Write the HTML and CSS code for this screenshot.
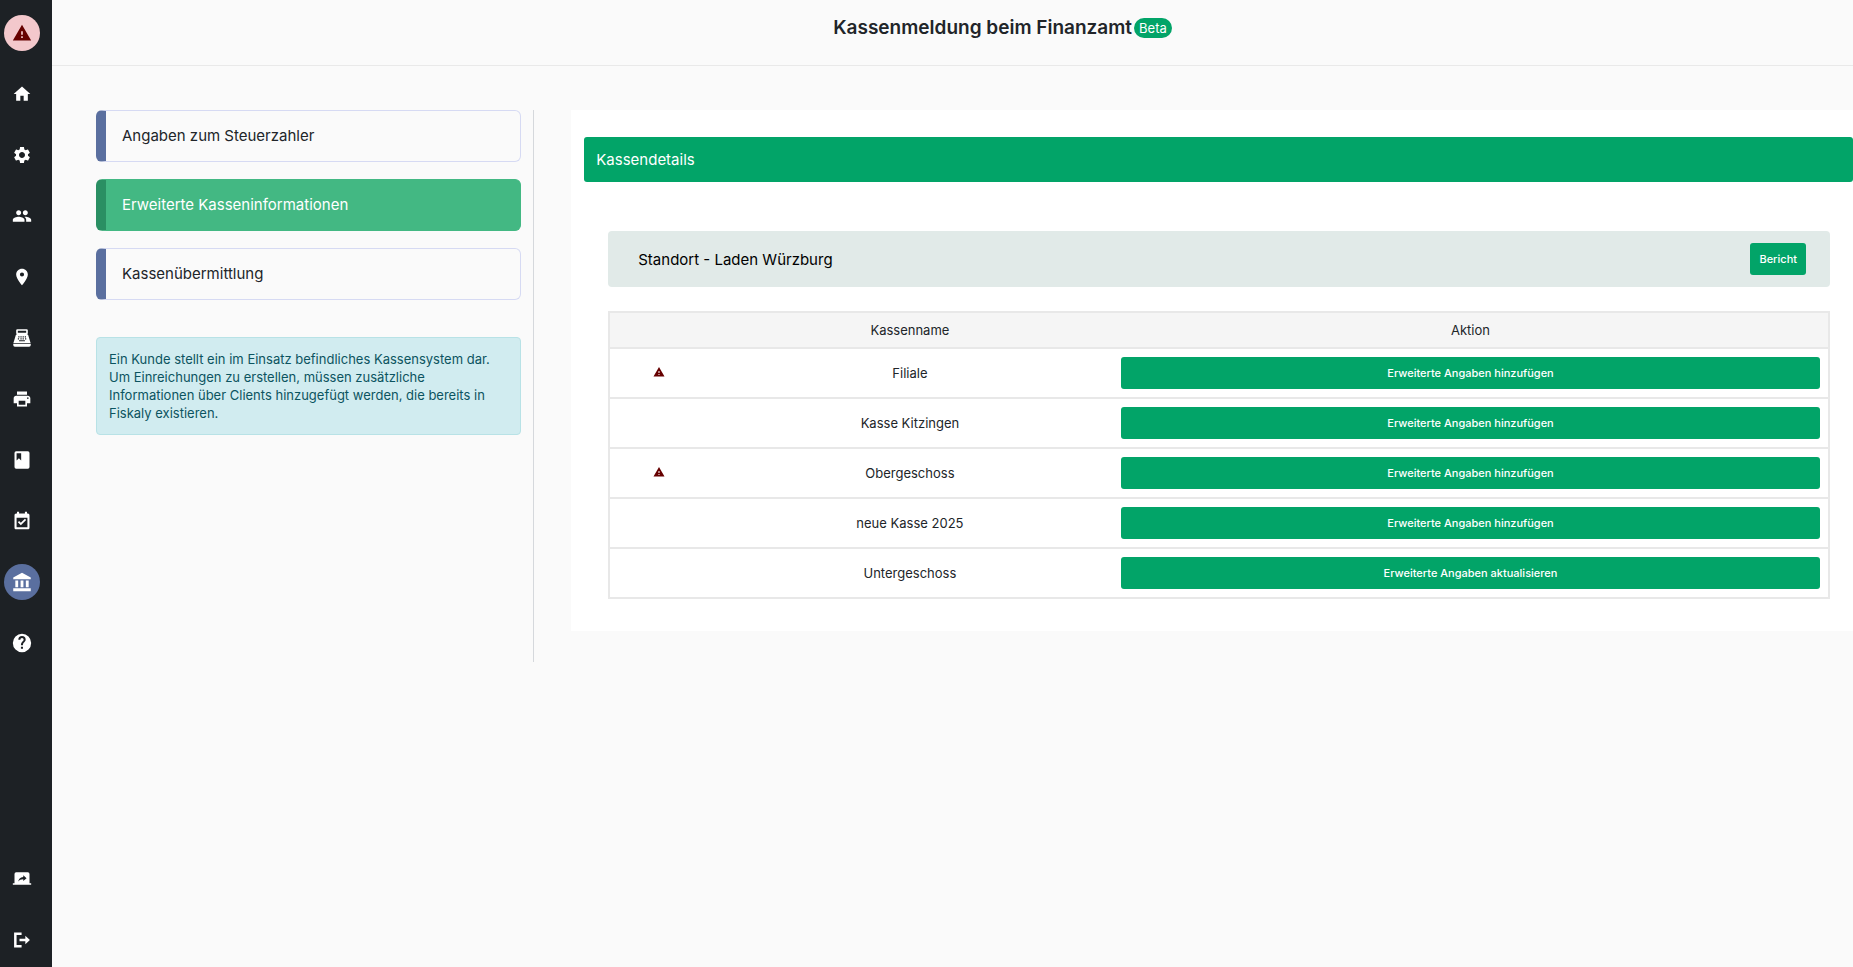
FILE: index.html
```html
<!DOCTYPE html>
<html lang="de">
<head>
<meta charset="utf-8">
<title>Kassenmeldung beim Finanzamt</title>
<link rel="stylesheet" href="styles.css">
</head>
<body>
<div class="app">
  <nav class="sidebar" aria-label="Hauptmenü">
    <div class="sidebar-group">
      <a class="side-link side-link-alert" href="#" aria-label="Warnungen"><svg viewBox="0 0 24 24"><path d="M1 21h22L12 2 1 21zm12-3h-2v-2h2v2zm0-4h-2v-4h2v4z"/></svg></a>
      <a class="side-link" href="#" aria-label="Startseite"><svg viewBox="0 0 24 24"><path d="M10 20v-6h4v6h5v-8h3L12 3 2 12h3v8z"/></svg></a>
      <a class="side-link" href="#" aria-label="Einstellungen"><svg viewBox="0 0 24 24"><path d="M19.14 12.94c.04-.3.06-.61.06-.94 0-.32-.02-.64-.07-.94l2.03-1.58c.18-.14.23-.41.12-.61l-1.92-3.32c-.12-.22-.37-.29-.59-.22l-2.39.96c-.5-.38-1.03-.7-1.62-.94l-.36-2.54c-.04-.24-.24-.41-.48-.41h-3.84c-.24 0-.43.17-.47.41l-.36 2.54c-.59.24-1.13.57-1.62.94l-2.39-.96c-.22-.08-.47 0-.59.22L2.74 8.87c-.12.21-.08.47.12.61l2.03 1.58c-.05.3-.09.63-.09.94s.02.64.07.94l-2.03 1.58c-.18.14-.23.41-.12.61l1.92 3.32c.12.22.37.29.59.22l2.39-.96c.5.38 1.03.7 1.62.94l.36 2.54c.05.24.24.41.48.41h3.84c.24 0 .44-.17.47-.41l.36-2.54c.59-.24 1.13-.56 1.62-.94l2.39.96c.22.08.47 0 .59-.22l1.92-3.32c.12-.22.07-.47-.12-.61l-2.01-1.58zM12 15.6c-1.98 0-3.6-1.62-3.6-3.6s1.62-3.6 3.6-3.6 3.6 1.62 3.6 3.6-1.62 3.6-3.6 3.6z"/></svg></a>
      <a class="side-link" href="#" aria-label="Benutzer"><svg viewBox="0 0 24 24"><path d="M16 11c1.66 0 2.99-1.34 2.99-3S17.66 5 16 5s-3 1.34-3 3 1.34 3 3 3zm-8 0c1.66 0 2.99-1.34 2.99-3S9.66 5 8 5 5 6.34 5 8s1.34 3 3 3zm0 2c-2.33 0-7 1.17-7 3.500V19h14v-2.500c0-2.330-4.670-3.500-7-3.500zm8 0c-.29 0-.62.02-.97.05 1.160.84 1.970 1.970 1.970 3.450V19h6v-2.500c0-2.330-4.670-3.500-7-3.500z"/></svg></a>
      <a class="side-link" href="#" aria-label="Standorte"><svg viewBox="0 0 24 24"><path d="M12 2C8.130 2 5 5.130 5 9c0 5.250 7 13 7 13s7-7.750 7-13c0-3.870-3.130-7-7-7zm0 9.500a2.500 2.500 0 0 1 0-5 2.500 2.500 0 0 1 0 5z"/></svg></a>
      <a class="side-link" href="#" aria-label="Kassen"><svg viewBox="0 0 24 24"><path fill-rule="evenodd" d="M6.500 1.500h11a1.500 1.500 0 0 1 1.500 1.500v3a1.500 1.500 0 0 1-1.500 1.500h-11A1.500 1.500 0 0 1 5 6V3a1.500 1.500 0 0 1 1.500-1.500zM7 3.200v2.600h10V3.200zM6 7.500h12c.7 0 1.200.4 1.400 1L22.300 18H1.700l2.900-9.500c.2-.6.700-1 1.400-1zM7.500 10v1.300H9V10zm2.600 0v1.300h1.500V10zm2.600 0v1.300h1.500V10zm2.600 0v1.300h1.500V10zM7 12.400v1.300h1.500v-1.300zm3.100 0v1.300h1.500v-1.300zm2.600 0v1.300h1.500v-1.300zm2.900 0v1.300h1.500v-1.300zM8.500 14.800v1.200h7v-1.200zM1.500 19h21v1.500a2 2 0 0 1-2 2h-17a2 2 0 0 1-2-2z"/></svg></a>
      <a class="side-link" href="#" aria-label="Drucker"><svg viewBox="0 0 24 24"><path d="M19 8H5c-1.660 0-3 1.340-3 3v6h4v4h12v-4h4v-6c0-1.660-1.340-3-3-3zm-3 11H8v-5h8v5zm3-7c-.55 0-1-.45-1-1s.45-1 1-1 1 .45 1 1-.45 1-1 1zm-1-9H6v4h12V3z"/></svg></a>
      <a class="side-link" href="#" aria-label="Kassenbuch"><svg viewBox="0 0 24 24"><path fill-rule="evenodd" d="M5 1.500h14a2 2 0 0 1 2 2v17a2 2 0 0 1-2 2H5a2 2 0 0 1-2-2v-17a2 2 0 0 1 2-2zM5.500 4v8.500L8.300 10l2.700 2.500V4z"/></svg></a>
      <a class="side-link" href="#" aria-label="Kalender"><svg viewBox="0 0 24 24"><path d="M17 10.800l-1.500-1.500-4.900 4.900-2.100-2.100L7 13.600l3.600 3.600zM19 3h-1V1h-2.500v2h-7V1H6v2H5c-1.110 0-1.990.9-1.990 2L3 20c0 1.100.89 2 2 2h14c1.100 0 2-.9 2-2V5c0-1.100-.9-2-2-2zm-.5 16.500h-13V8h13z"/></svg></a>
      <a class="side-link side-link-active" href="#" aria-label="Finanzamt" aria-current="page"><svg viewBox="0 0 24 24"><path d="M12 1L1.500 6.500v2.300h21V6.500zM4 10.200v8h3.400v-8zm6.300 0v8h3.400v-8zm6.300 0v8H20v-8zM1.500 19.600V23h21v-3.400z"/></svg></a>
      <a class="side-link" href="#" aria-label="Hilfe"><svg viewBox="0 0 24 24"><path d="M12 1a11 11 0 1 0 0 22 11 11 0 0 0 0-22zm1.200 17.800h-2.500v-2.400h2.500zm2.300-8.500l-1 1.100c-.9.900-1.300 1.600-1.300 3.300h-2.500v-.6c0-1.300.5-2.400 1.300-3.300l1.400-1.400c.4-.4.600-.9.600-1.400a2 2 0 1 0-4 0H7.600a4.400 4.400 0 1 1 8.800 0c0 .9-.4 1.700-.9 2.300z"/></svg></a>
    </div>
    <div class="sidebar-group">
      <a class="side-link" href="#" aria-label="Bildschirm teilen"><svg viewBox="0 0 24 24"><path fill-rule="evenodd" d="M5 4h14a2 2 0 0 1 2 2v11h2v2H1v-2h2V6a2 2 0 0 1 2-2zm8.500 3.500v2.200C9.600 10.200 8 12.500 7.400 15c1.500-1.900 3.300-2.700 6.100-2.700v2.200l4-3.500z"/></svg></a>
      <a class="side-link" href="#" aria-label="Abmelden"><svg viewBox="0 0 24 24"><path d="M2.500 3h9v3h-6v12h6v3h-9zM16 7l5.500 5-5.500 5v-3.500H9v-3h7z"/></svg></a>
    </div>
  </nav>

  <div class="page">
    <header class="topbar">
      <h1 class="title">Kassenmeldung beim Finanzamt</h1>
      <span class="badge">Beta</span>
    </header>

    <div class="content">
      <aside class="steps">
        <a class="step" href="#">Angaben zum Steuerzahler</a>
        <a class="step step-active" href="#" aria-current="step">Erweiterte Kasseninformationen</a>
        <a class="step" href="#">Kassenübermittlung</a>
        <p class="hint">Ein Kunde stellt ein im Einsatz befindliches Kassensystem dar. Um Einreichungen zu erstellen, müssen zusätzliche Informationen über Clients hinzugefügt werden, die bereits in Fiskaly existieren.</p>
      </aside>

      <main class="panel">
        <h2 class="panel-title">Kassendetails</h2>
        <section class="location">
          <div class="location-head">
            <h3 class="location-name">Standort - Laden Würzburg</h3>
            <button class="btn" type="button">Bericht</button>
          </div>
          <table class="registers">
            <colgroup><col class="col-status"><col class="col-name"><col></colgroup>
            <thead>
              <tr><th></th><th>Kassenname</th><th>Aktion</th></tr>
            </thead>
            <tbody>
              <tr><td><svg class="warn" viewBox="0 0 24 24" role="img" aria-label="Warnung"><path d="M1 21h22L12 2 1 21zm12-3h-2v-2h2v2zm0-4h-2v-4h2v4z"/></svg></td><td>Filiale</td><td><button class="btn btn-wide" type="button">Erweiterte Angaben hinzufügen</button></td></tr>
              <tr><td></td><td>Kasse Kitzingen</td><td><button class="btn btn-wide" type="button">Erweiterte Angaben hinzufügen</button></td></tr>
              <tr><td><svg class="warn" viewBox="0 0 24 24" role="img" aria-label="Warnung"><path d="M1 21h22L12 2 1 21zm12-3h-2v-2h2v2zm0-4h-2v-4h2v4z"/></svg></td><td>Obergeschoss</td><td><button class="btn btn-wide" type="button">Erweiterte Angaben hinzufügen</button></td></tr>
              <tr><td></td><td>neue Kasse 2025</td><td><button class="btn btn-wide" type="button">Erweiterte Angaben hinzufügen</button></td></tr>
              <tr><td></td><td>Untergeschoss</td><td><button class="btn btn-wide" type="button">Erweiterte Angaben aktualisieren</button></td></tr>
            </tbody>
          </table>
        </section>
      </main>
    </div>
  </div>
</div>
</body>
</html>
```

FILE: styles.css
```css
* {
  box-sizing: border-box;
}

body {
  margin: 0;
  background: #fafafa;
  color: #212529;
  font-family: Inter, "Liberation Sans", sans-serif;
  font-size: 13px;
}

.app {
  display: flex;
  min-height: 100vh;
}

/* Sidebar */
.sidebar {
  flex: 0 0 52px;
  display: flex;
  flex-direction: column;
  justify-content: space-between;
  padding: 15px 12px 9px 4px;
  background: #1d2125;
}

.sidebar-group {
  display: flex;
  flex-direction: column;
  gap: 25px;
}

.side-link {
  display: flex;
  align-items: center;
  justify-content: center;
  width: 36px;
  height: 36px;
  border-radius: 50%;
  color: #fff;
}

.side-link svg {
  width: 20px;
  height: 20px;
  fill: currentColor;
}

.side-link-alert {
  background: #f3c8cc;
  color: #660000;
}

.side-link-active {
  background: #5a6f9f;
}

/* Header */
.page {
  flex: 1;
  min-width: 0;
}

.topbar {
  display: flex;
  align-items: center;
  justify-content: center;
  gap: 2px;
  height: 66px;
  padding: 0 0 10px 100px;
  border-bottom: 1px solid #e9e9e9;
}

.title {
  margin: 0;
  font-size: 19px;
  font-weight: 600;
}

.badge {
  padding: 0 5px;
  border-radius: 10px;
  background: #02a468;
  color: #fff;
  line-height: 20px;
}

/* Content columns */
.content {
  display: flex;
  align-items: flex-start;
  gap: 37px;
  padding: 44px 0 0 44px;
}

.steps {
  flex: 0 0 calc(25% - 1px);
  display: flex;
  flex-direction: column;
  gap: 17px;
  min-height: 552px;
  padding-right: 12px;
  border-right: 1px solid #d5d8dc;
}

.step {
  padding: 0 16px;
  border: 1px solid #d6daf3;
  border-left: 10px solid #5a6f9f;
  border-radius: 6px;
  color: #212529;
  font-size: 15px;
  line-height: 50px;
  text-decoration: none;
}

.step-active {
  border-color: #43b883;
  border-left-color: #2a8f63;
  background: #43b883;
  color: #fff;
}

.hint {
  margin: 20px 0 0;
  padding: 12px 20px 12px 12px;
  border: 1px solid #b8e2e6;
  border-radius: 4px;
  background: #d1ecf0;
  color: #0c5460;
  line-height: 18px;
}

/* Panel */
.panel {
  flex: 1;
  min-width: 0;
  padding: 27px 0 32px 13px;
  background: #fff;
}

.panel-title {
  margin: 0;
  padding: 0 12px;
  border-radius: 3px;
  background: #02a468;
  color: #fff;
  font-size: 15px;
  font-weight: 400;
  line-height: 45px;
}

.location {
  padding: 49px 23px 0 24px;
}

.location-head {
  display: flex;
  align-items: center;
  justify-content: space-between;
  padding: 12px 24px 12px 30px;
  border-radius: 4px;
  background: #e1eae8;
}

.location-name {
  margin: 0;
  color: #000;
  font-size: 15px;
  font-weight: 400;
}

.btn {
  height: 32px;
  padding: 0 9px;
  border: 0;
  border-radius: 3px;
  background: #02a468;
  color: #fff;
  font-family: inherit;
  font-size: 11px;
  font-weight: 500;
}

.btn-wide {
  display: block;
  width: 100%;
}

.registers {
  width: 100%;
  margin-top: 24px;
  border: 2px solid #e8e8e8;
  border-collapse: collapse;
  table-layout: fixed;
}

.col-status {
  width: 8%;
}

.col-name {
  width: 33.3%;
}

.registers th {
  height: 36px;
  padding: 0;
  background: #f5f5f5;
  font-weight: 400;
}

.registers td {
  height: 50px;
  padding: 8px;
  border-top: 2px solid #e8e8e8;
  text-align: center;
}

.warn {
  width: 12px;
  height: 12px;
  fill: #660000;
}
```
